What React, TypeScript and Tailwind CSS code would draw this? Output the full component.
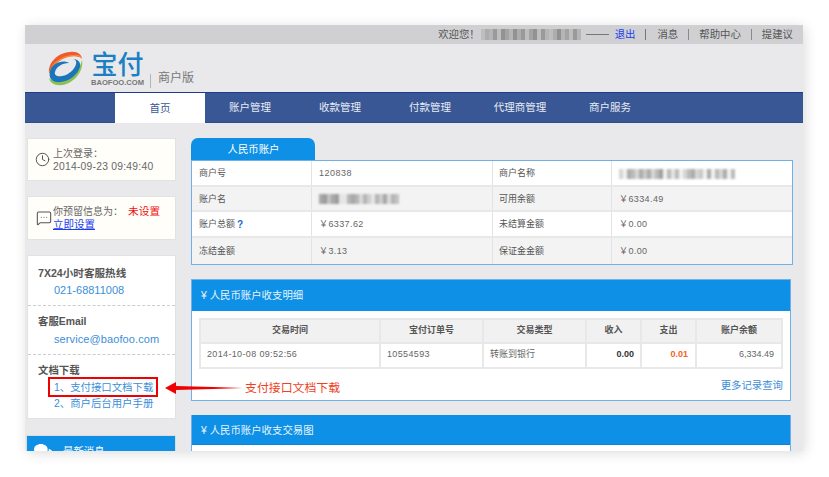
import { Clock, MessageSquareMore } from "lucide-react";
import { FaComments } from "react-icons/fa";

const cjk = "font-['Liberation_Sans','Noto_Sans_CJK_SC',sans-serif]";

// mosaic that stands in for the blurred-out private text
const Mosaic = ({ cells, className }: { cells: number[]; className?: string }) => (
  <span className={`inline-flex items-stretch ${className ?? ""}`}>
    {cells.map((c, i) => (
      <span key={i} className="w-[4px] bg-[#777]" style={{ opacity: c }} />
    ))}
  </span>
);

const TopBar = () => (
  <div className="flex h-[19px] items-center justify-end bg-[#d0d0d2] pr-[10px] text-[10.4px] text-[#555]">
    <span>欢迎您！</span>
    <Mosaic className="ml-[1px] h-[11px] blur-[0.7px]" cells={[0.2, 0.4, 0.3, 0.6, 0.2, 0.7, 0.5, 0.3, 0.7, 0.4, 0.6, 0.2, 0.5, 0.7, 0.2, 0.6, 0.3, 0.2, 0.4, 0.7, 0.3, 0.5, 0.2, 0.6, 0.3]} />
    <span className="ml-[5px] h-px w-[23px] bg-[#777]" />
    <a className="ml-[6px] text-[#1a3df0]">退出</a>
    <span className="mr-[11px] ml-[10px] h-[11px] w-px bg-[#777]" />
    <span>消息</span>
    <span className="mx-[10px] h-[11px] w-px bg-[#888]" />
    <span>帮助中心</span>
    <span className="mx-[10px] h-[11px] w-px bg-[#888]" />
    <span>提建议</span>
  </div>
);

const Logo = () => (
  <div className="flex h-[48px] items-start pl-[23px] pt-[6px]">
    <svg width="35" height="36" viewBox="0 0 35 36" className="mt-px">
      <path d="M1 22C0 12 9 2 22 1c8-1 11 3 12 6-7-3-17-2-24 4-4 3-7 7-9 11z" fill="#f0592b" />
      <path d="M1 22C3 11 16 3 28 4c4 0 6 2 6 4-1-2-4-3-8-3C15 5 5 13 3 22z" fill="#f58a3c" />
      <path d="M34 9c2 10-7 23-20 25-7 1-12-2-13-7 4 4 11 5 18 1 8-4 13-11 15-19z" fill="#8cc152" />
      <path d="M2 20c-2 8 3 12 11 11 9-1 17-8 19-15 1-5-2-8-8-8 3 0 5 2 4 5-1 5-7 11-14 12-5 1-8-1-7-4 1-5 7-9 14-9C15 8 4 12 2 20z" fill="#1b75bb" />
    </svg>
    <div className="ml-[8px] flex w-[53px] flex-col items-center pt-[2px]">
      <span className="text-[26px] leading-[27px] font-medium text-[#1b7fc4]">宝付</span>
      <span className="text-[7.6px] leading-[7px] font-bold whitespace-nowrap text-[#777]">BAOFOO.COM</span>
    </div>
    <span className="mt-[24px] ml-[6px] h-[14px] w-px bg-[#b5b5b5]" />
    <span className="mt-[19px] ml-[7px] text-[12px] leading-[18px] text-[#777]">商户版</span>
  </div>
);

const navItems = ["账户管理", "收款管理", "付款管理", "代理商管理", "商户服务"];

const Nav = () => (
  <div className="flex h-[31px] border-t border-b border-t-[#1f3c8c] border-b-[#2f4c8c] bg-[#3a5795] pl-[90px] text-[10.5px] text-[#e8edf6]">
    <div className="-mb-px flex w-[90px] items-center justify-center bg-white pt-px text-[#3a5795]">首页</div>
    {navItems.map((n) => (
      <div key={n} className="flex w-[90px] items-center justify-center pt-px">
        {n}
      </div>
    ))}
  </div>
);

const Sidebar = () => (
  <div className="flex w-[149px] shrink-0 flex-col text-[#666]">
    <div className="flex h-[43px] items-center border border-[#e2e2e2] bg-[#fffef9] pl-[7px] text-[10px] leading-[13px]">
      <Clock className="h-[15px] w-[15px] text-[#555]" strokeWidth={1.6} />
      <div className="ml-[3px]">
        <div>上次登录：</div>
        <div className="text-[10.3px] tracking-[0.25px] whitespace-nowrap">2014-09-23 09:49:40</div>
      </div>
    </div>
    <div className="mt-[15px] flex h-[44px] items-center border border-[#e2e2e2] bg-[#fffef9] pl-[8px] text-[10px] leading-[13px]">
      <MessageSquareMore className="h-[16px] w-[16px] text-[#555]" strokeWidth={1.6} />
      <div className="ml-[1px]">
        <div className="whitespace-nowrap">
          你预留信息为：<span className="ml-[5px] text-[10.7px] text-[#f01010]">未设置</span>
        </div>
        <a className="text-[10.5px] text-[#1a3df0] underline">立即设置</a>
      </div>
    </div>
    <div className="mt-[15px] h-[164px] border border-[#e2e2e2] bg-white text-[10.4px]">
      <div className="h-[50px] border-b border-dashed border-[#ccc] pt-[10px] pl-[10px]">
        <div className="text-[10.6px] leading-[14px] font-bold text-[#555]">7X24小时客服热线</div>
        <div className="mt-[3px] pl-[16px] text-[11px] leading-[14px] text-[#3b8ed8]">021-68811008</div>
      </div>
      <div className="h-[49px] border-b border-dashed border-[#ccc] pt-[9px] pl-[10px]">
        <div className="leading-[14px] font-bold text-[#555]">客服Email</div>
        <div className="mt-[3px] pl-[16px] text-[11px] leading-[14px] tracking-[0.1px] text-[#3b8ed8]">service@baofoo.com</div>
      </div>
      <div className="pt-[9px] pl-[10px]">
        <div className="leading-[14px] font-bold text-[#555]">文档下载</div>
        <div className="mt-[2px] pl-[16px] leading-[15.5px] whitespace-nowrap text-[#3b8ed8]">
          <div>1、支付接口文档下载</div>
          <div>2、商户后台用户手册</div>
        </div>
      </div>
    </div>
    <div className="mt-[16px] -ml-px flex h-[40px] w-[150px] items-start border border-[#dcdcdc] bg-[#0e90e6] pt-[7px] pl-[7px] text-[10.4px] text-white">
      <FaComments className="h-[17px] w-[19px]" />
      <span className="ml-[10px] leading-[18px]">最新消息</span>
    </div>
  </div>
);

const accountRows = [
  { a: "商户号", b: <span className="tracking-[0.5px]">120838</span>, c: "商户名称", d: <Mosaic className="h-[10px] blur-[0.8px]" cells={[0.3, 0.1, 0.6, 0.5, 0.3, 0.6, 0.4, 0.6, 0.3, 0.5, 0.7, 0.1, 0.5, 0.2, 0.5, 0.1, 0.3, 0.5, 0.6, 0.3, 0.4, 0.1, 0.6, 0.1, 0.5, 0.3, 0.6, 0.1, 0.5]} />, bg: "bg-white" },
  { a: "账户名", b: <Mosaic className="h-[10px] blur-[0.8px]" cells={[0.6, 0.7, 0.4, 0.6, 0.7, 0.1, 0.1, 0.5, 0.6, 0.5, 0.2, 0.5, 0.3, 0.1, 0.5, 0.3, 0.6, 0.2, 0.5, 0.4]} />, c: "可用余额", d: <span className="tracking-[0.4px]">￥6334.49</span>, bg: "bg-[#f3f3f3]" },
  { a: <>账户总额<b className="ml-[2px] text-[10px] text-[#1a6ad0]">?</b></>, b: <span className="tracking-[0.4px]">￥6337.62</span>, c: "未结算金额", d: <span className="tracking-[0.4px]">￥0.00</span>, bg: "bg-white" },
  { a: "冻结金额", b: <span className="tracking-[0.4px]">￥3.13</span>, c: "保证金金额", d: <span className="tracking-[0.4px]">￥0.00</span>, bg: "bg-[#f3f3f3]" },
];

const AccountTable = () => (
  <div>
    <div className="flex h-[22px] w-[124px] items-center justify-center rounded-t-[7px] bg-[#0e90e6] pt-[2px] pl-px text-[10.4px] text-white">人民币账户</div>
    <div className="w-[602px] border border-[#6db0ea] text-[9px] text-[#555]">
      {accountRows.map((r, i) => (
        <div key={i} className={`grid h-[25.5px] grid-cols-[120px_181px_119px_1fr] border-b-2 border-[#e8e8e8] last:h-[26px] last:border-b-0 ${r.bg}`}>
          <div className="flex items-center border-r border-[#e3e3e3] pt-[2px] pl-[7px]">{r.a}</div>
          <div className="flex items-center border-r border-[#e3e3e3] pt-[2px] pl-[7px] text-[#666]">{r.b}</div>
          <div className="flex items-center border-r border-[#e3e3e3] pt-[2px] pl-[6px]">{r.c}</div>
          <div className="flex items-center pt-[2px] pl-[7px] text-[#666]">{r.d}</div>
        </div>
      ))}
    </div>
  </div>
);

const detailCols = "grid grid-cols-[180px_103px_103px_55px_55px_1fr]";

const DetailPanel = () => (
  <div className="mt-[14px] h-[122px] w-[600px] border border-[#6db0ea] bg-white text-[9px]">
    <div className="flex h-[31px] items-center bg-[#0e90e6] pt-[2px] pl-[9px] text-[10.4px] text-[#e8f4fd]">¥ 人民币账户收支明细</div>
    <div className="mx-[7px] mt-[7px] border-2 border-[#e8e8e8]">
      <div className={`${detailCols} h-[24px] border-b-2 border-[#e8e8e8] bg-[#f1f1f1] font-bold text-[#555]`}>
        {["交易时间", "宝付订单号", "交易类型", "收入", "支出", "账户余额"].map((h) => (
          <div key={h} className="flex items-center justify-center border-r-2 border-[#e8e8e8] last:border-r-0">{h}</div>
        ))}
      </div>
      <div className={`${detailCols} h-[23px] text-[#666]`}>
        <div className="flex items-center border-r-2 border-[#e8e8e8] pl-[6px] tracking-[0.35px]">2014-10-08 09:52:56</div>
        <div className="flex items-center border-r-2 border-[#e8e8e8] pl-[6px] tracking-[0.35px]">10554593</div>
        <div className="flex items-center border-r-2 border-[#e8e8e8] pl-[6px]">转账到银行</div>
        <div className="flex items-center justify-end border-r-2 border-[#e8e8e8] pr-[6px] font-bold text-[#333]">0.00</div>
        <div className="flex items-center justify-end border-r-2 border-[#e8e8e8] pr-[7px] font-bold text-[#f2642a]">0.01</div>
        <div className="flex items-center justify-end pr-[7px]">6,334.49</div>
      </div>
    </div>
    <div className="mt-[11px] pr-[7px] text-right text-[10.4px] leading-[12px] text-[#3b8ed8]">更多记录查询</div>
  </div>
);

const ChartPanel = () => (
  <div className="mt-[14px] h-[60px] w-[600px] border border-[#6db0ea] border-t-0 bg-white">
    <div className="flex h-[30px] items-center border-b border-[#0a84d8] bg-[#0e90e6] pt-[3px] pl-[9px] text-[10.4px] text-[#e8f4fd]">¥ 人民币账户收支交易图</div>
  </div>
);

const Annotation = () => (
  <>
    <div className="absolute top-[352px] left-[23px] h-[20px] w-[110px] border-2 border-[#f00000]" />
    <svg className="absolute top-[353px] left-[138px]" width="84" height="20" viewBox="0 0 84 20">
      <path d="M2 10 L13 4 L13 8 L50 9 L80 10 L50 11 L13 12 L13 16 Z" fill="#f00000" />
    </svg>
    <span className="absolute top-[354px] left-[220px] text-[11.9px] leading-[18px] whitespace-nowrap text-[#f04020]">支付接口文档下载</span>
  </>
);

const App = () => (
  <div className={`h-screen overflow-hidden bg-white pt-[25px] pl-[25px] ${cjk}`}>
    <div className="relative h-[426px] w-[778px] overflow-hidden bg-[#e9e9eb] shadow-[2px_2px_12px_rgba(0,0,0,0.14)]">
      <TopBar />
      <Logo />
      <Nav />
      <div className="flex pt-[15px] pl-[2px]">
        <Sidebar />
        <div className="ml-[15px]">
          <AccountTable />
          <DetailPanel />
          <ChartPanel />
        </div>
      </div>
      <Annotation />
    </div>
  </div>
);

export default App;
